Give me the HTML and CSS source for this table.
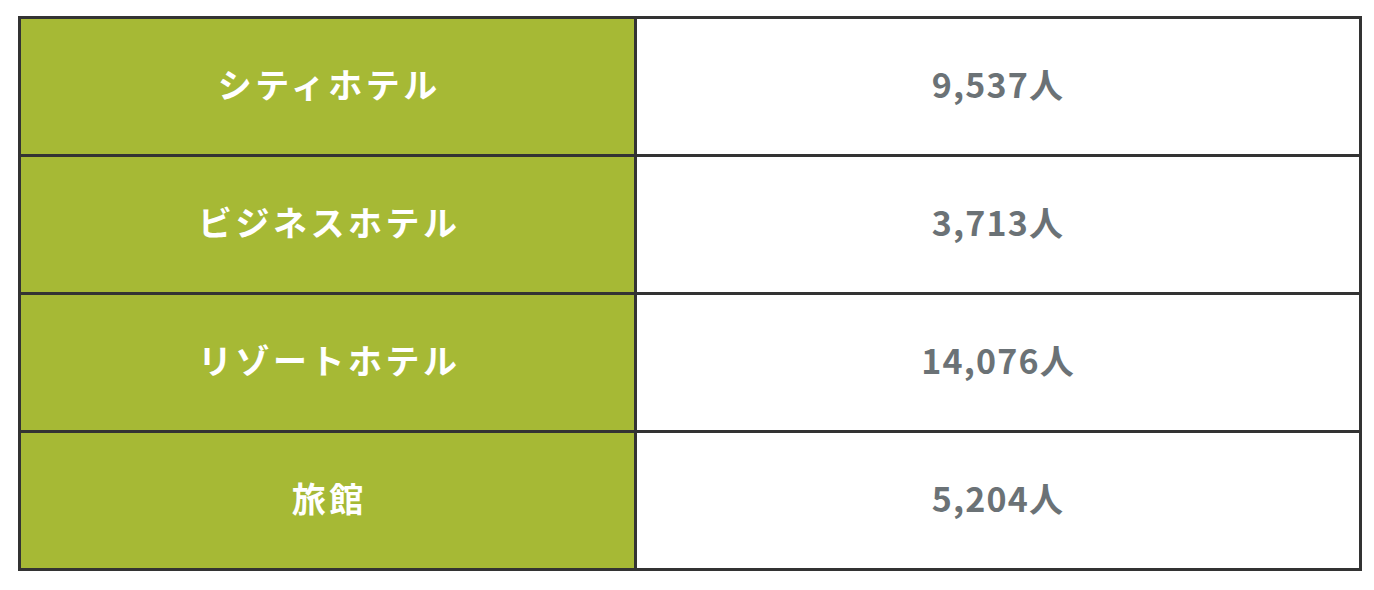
FILE: index.html
```html
<!DOCTYPE html>
<html lang="ja">
<head>
<meta charset="utf-8">
<link rel="stylesheet" href="styles.css">
</head>
<body>
<table class="stats">
  <tr><th>シティホテル</th><td>9,537人</td></tr>
  <tr><th>ビジネスホテル</th><td>3,713人</td></tr>
  <tr><th>リゾートホテル</th><td>14,076人</td></tr>
  <tr><th>旅館</th><td>5,204人</td></tr>
</table>
</body>
</html>
```

FILE: styles.css
```css
html, body {
  margin: 0;
  padding: 0;
  background: #ffffff;
}
body {
  padding: 16px 0 0 18px;
  font-family: "Noto Sans CJK JP", "Noto Sans", sans-serif;
}
.stats {
  border-collapse: collapse;
  width: 1344px;
  table-layout: fixed;
}
.stats th, .stats td {
  border: 3px solid #333333;
  height: 138px;
  padding: 0 0 7px;
  box-sizing: border-box;
  text-align: center;
  vertical-align: middle;
  font-size: 34px;
  font-weight: 700;
}
.stats th {
  width: 616px;
  background: #a6b935;
  color: #ffffff;
  letter-spacing: 3.5px;
  text-indent: 3.5px;
}
.stats td {
  background: #ffffff;
  color: #6b7276;
  letter-spacing: 1.2px;
}
```
